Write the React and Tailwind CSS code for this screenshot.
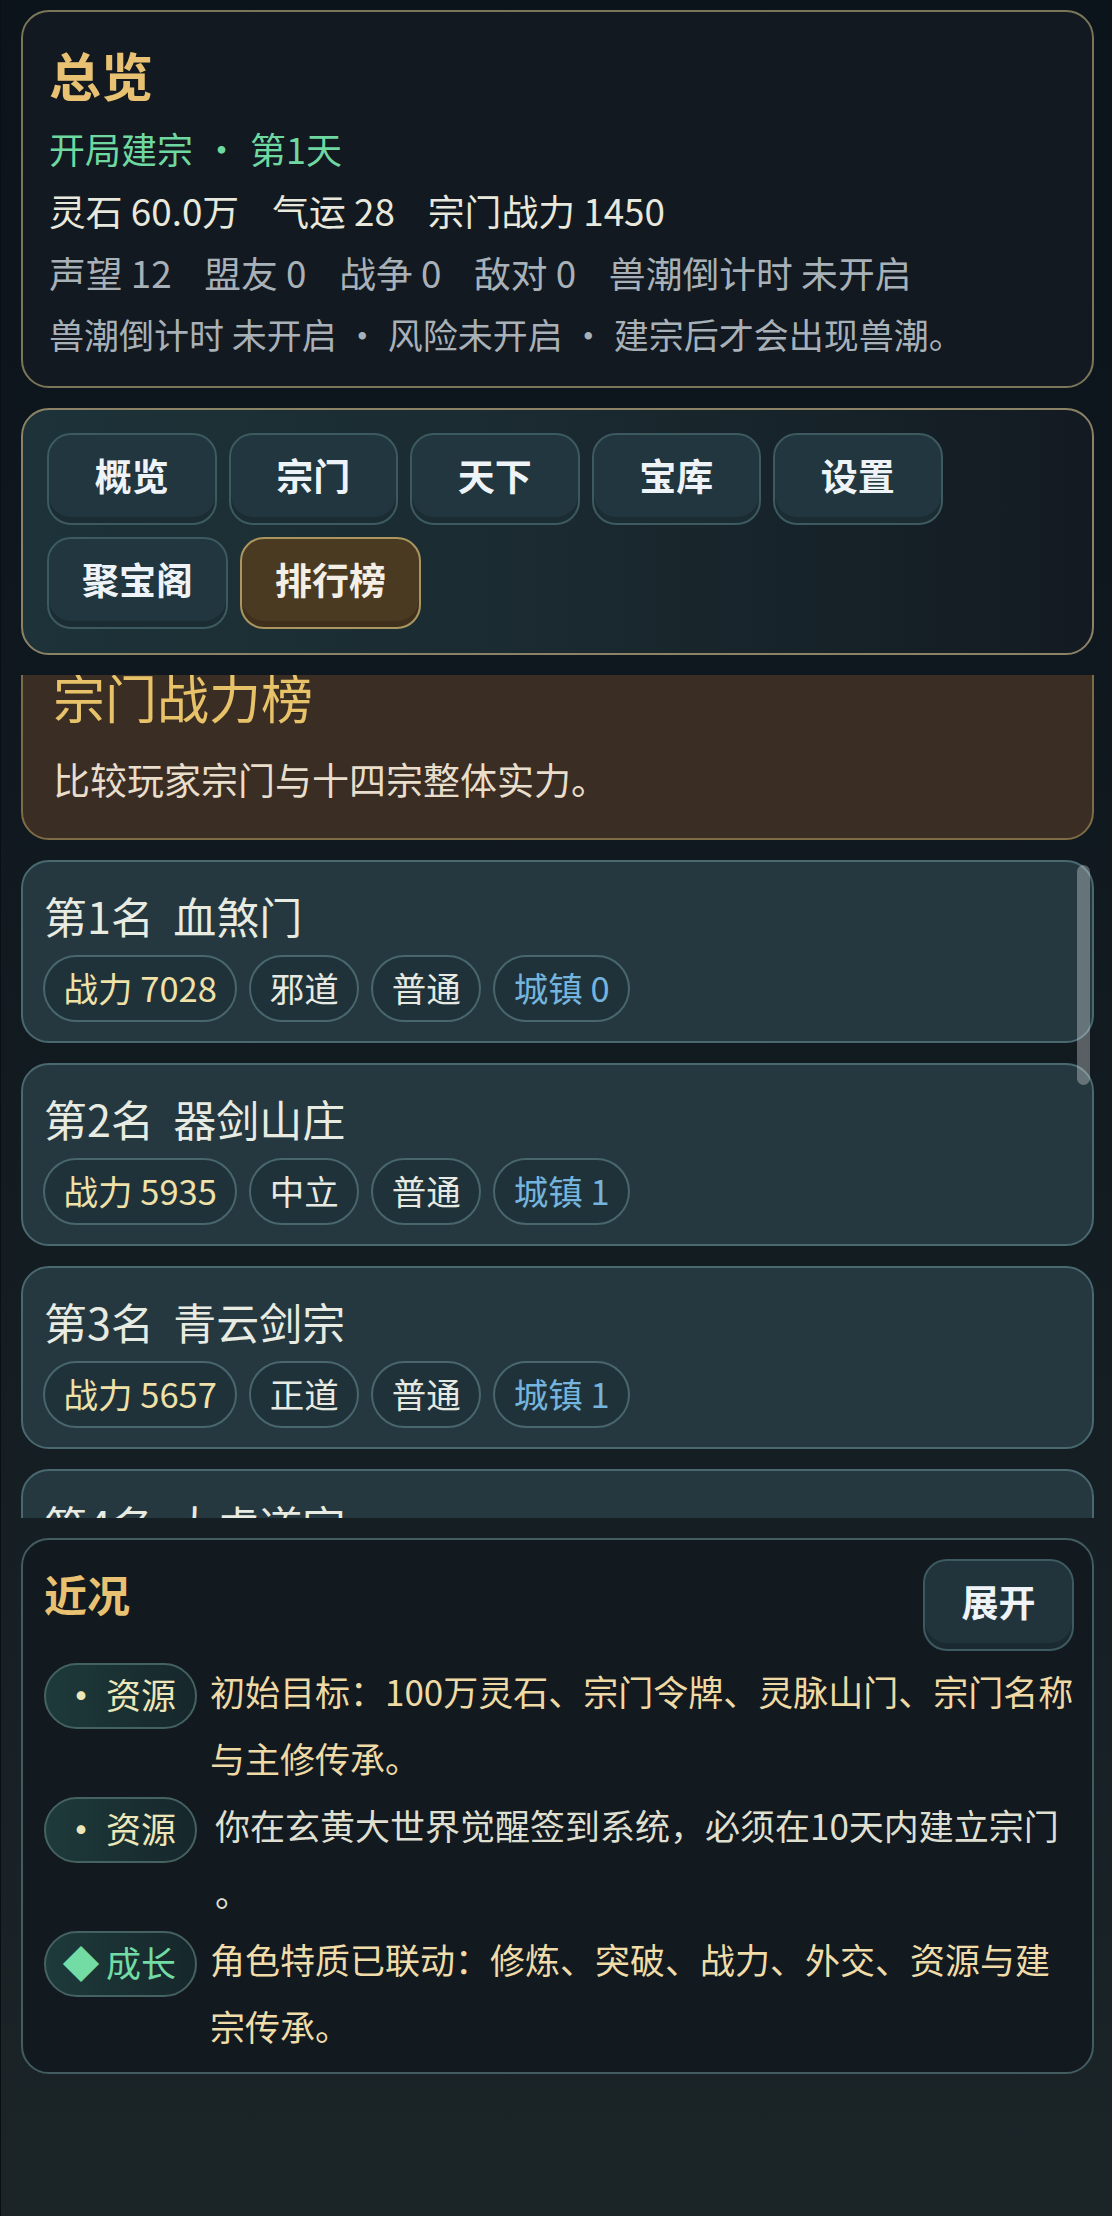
import React from "react";

const tabsRow1 = ["概览", "宗门", "天下", "宝库", "设置"];

function Tab({ label, active }) {
  return (
    <button
      className={
        active
          ? "h-[92px] min-w-[169.5px] px-[33px] pb-[7px] rounded-[24px] border-2 border-[#ab9660] bg-[#4b3a22] text-[37px] font-bold text-[#f4efe6] shadow-[inset_0_-6px_0_rgba(0,0,0,0.16)]"
          : "h-[92px] min-w-[169.5px] px-[33px] pb-[7px] rounded-[24px] border-2 border-[#3c5a60] bg-[#21363e] text-[37px] font-bold text-[#eef3f7] shadow-[inset_0_-6px_0_rgba(0,0,0,0.18)]"
      }
    >
      {label}
    </button>
  );
}

function Pill({ children, tone }) {
  return (
    <span
      className={`h-[67px] px-[18.5px] rounded-full border-2 border-[#48666b] bg-[#1f323a] text-[34.5px] leading-[60px] whitespace-nowrap ${tone}`}
    >
      {children}
    </span>
  );
}

function RankCard({ rank, name, power, side, town }) {
  return (
    <div className="h-[183px] shrink-0 rounded-[28px] border-2 border-[#4a6870] bg-[#25383f] px-[20px] pt-[28px]">
      <div className="h-[50px] pl-[1px] text-[43px] leading-[50px] text-[#e8ebe2] whitespace-pre">
        第{rank}名{"  "}{name}
      </div>
      <div className="mt-[15px] flex gap-[12px]">
        <Pill tone="text-[#efe1a8]">战力 {power}</Pill>
        <Pill tone="text-[#e6eae2]">{side}</Pill>
        <Pill tone="text-[#e6eae2]">普通</Pill>
        <Pill tone="text-[#74b4dd]">城镇 {town}</Pill>
      </div>
    </div>
  );
}

function LogRow({ icon, iconClass, label, labelClass, textClass, children }) {
  return (
    <div className="flex h-[134px]">
      <div className="mt-[6px] flex h-[66px] w-[153px] shrink-0 items-center rounded-full border-2 border-[#44625f] bg-gradient-to-r from-[#1e3a3a] to-[#16272c] pb-[3px]">
        <span className={`flex w-[60px] shrink-0 justify-center pl-[10px] ${iconClass}`}>{icon}</span>
        <span className={`text-[35px] ${labelClass}`}>{label}</span>
      </div>
      <div className={`ml-[13px] whitespace-nowrap text-[35px] leading-[67px] ${textClass}`}>{children}</div>
    </div>
  );
}

function Dot({ wide }) {
  return <span className={`inline-block text-center ${wide ? "w-[57px]" : "w-[51px]"}`}>·</span>;
}

export default function App() {
  return (
    <div className="flex min-h-[2216px] flex-col gap-[20px] border-l border-[#0a0f14] bg-gradient-to-b from-[#0b131b] via-[#121b20] to-[#1b2528] pl-[20px] pr-[18px] pt-[10px] font-['Noto_Sans_CJK_SC','Noto_Sans',sans-serif]">
      <section className="h-[378px] shrink-0 rounded-[28px] border-2 border-[#7b7658] bg-[#121920] px-[26px] pt-[33px]">
        <h1 className="h-[60px] text-[52px] font-bold leading-[60px] text-[#e8c272]">总览</h1>
        <div className="mt-[12px] text-[36px] leading-[62px] text-[#6fd8a0]">
          开局建宗
          <Dot wide />
          第1天
        </div>
        <div className="flex gap-[33px] text-[36.8px] leading-[62px] text-[#e8e8dc]">
          <span>灵石 60.0万</span>
          <span>气运 28</span>
          <span>宗门战力 1450</span>
        </div>
        <div className="flex gap-[32.6px] text-[36.8px] leading-[62px] text-[#a8b0b8]">
          <span>声望 12</span>
          <span>盟友 0</span>
          <span>战争 0</span>
          <span>敌对 0</span>
          <span>兽潮倒计时 未开启</span>
        </div>
        <div className="text-[35px] leading-[62px] text-[#a8b0b8]">
          兽潮倒计时 未开启
          <Dot />
          风险未开启
          <Dot />
          建宗后才会出现兽潮。
        </div>
      </section>

      <nav className="h-[247px] shrink-0 rounded-[28px] border-2 border-[#8c8265] bg-gradient-to-r from-[#1d3339] via-[#1a2a30] to-[#131a22] px-[24px] pt-[23px]">
        <div className="flex gap-[12px]">
          {tabsRow1.map((t) => (
            <Tab key={t} label={t} />
          ))}
        </div>
        <div className="mt-[12px] flex gap-[12px]">
          <Tab label="聚宝阁" />
          <Tab label="排行榜" active />
        </div>
      </nav>

      <div className="relative h-[843px] shrink-0 overflow-hidden">
        <div className="-mt-[32px] flex flex-col gap-[20px]">
          <div className="h-[197px] shrink-0 rounded-[28px] border-2 border-[#7d6c45] bg-[#3a2e24] pl-[30px] pt-[16px]">
            <h2 className="text-[52px] leading-[72px] text-[#e8c268]">宗门战力榜</h2>
            <p className="mt-[16px] text-[37px] leading-[60px] text-[#e9ddcc]">比较玩家宗门与十四宗整体实力。</p>
          </div>
          <RankCard rank={1} name="血煞门" power={7028} side="邪道" town={0} />
          <RankCard rank={2} name="器剑山庄" power={5935} side="中立" town={1} />
          <RankCard rank={3} name="青云剑宗" power={5657} side="正道" town={1} />
          <RankCard rank={4} name="太虚道宗" power={5120} side="正道" town={1} />
        </div>
        <div className="absolute left-[1056px] top-[190px] h-[220px] w-[13px] rounded-full bg-white/30" />
      </div>

      <section className="h-[536px] shrink-0 rounded-[28px] border-2 border-[#425c60] bg-[#12191f] pl-[21px] pr-[18px] pt-[19px]">
        <div className="flex items-start justify-between">
          <h3 className="mt-[4px] text-[43px] font-bold leading-[60px] text-[#e8c272]">近况</h3>
          <button className="h-[92px] w-[151px] rounded-[24px] border-2 border-[#3c5a60] bg-[#21343c] pb-[7px] text-[37px] font-bold text-[#eef3f7] shadow-[inset_0_-6px_0_rgba(0,0,0,0.18)]">
            展开
          </button>
        </div>
        <div className="mt-[6px]">
          <LogRow icon="·" iconClass="text-[#ece6b8] font-bold text-[34px]" label="资源" labelClass="text-[#ece6b8]" textClass="text-[#efd9a5]">
            初始目标：100万灵石、宗门令牌、灵脉山门、宗门名称
            <br />
            与主修传承。
          </LogRow>
          <LogRow icon="·" iconClass="text-[#ece6b8] font-bold text-[34px]" label="资源" labelClass="text-[#ece6b8]" textClass="pl-[5px] text-[#dfdfd0]">
            你在玄黄大世界觉醒签到系统，必须在10天内建立宗门
            <br />
            。
          </LogRow>
          <LogRow icon="◆" iconClass="text-[#72dca4] text-[37px]" label="成长" labelClass="text-[#72dca4]" textClass="text-[#efdca8]">
            角色特质已联动：修炼、突破、战力、外交、资源与建
            <br />
            宗传承。
          </LogRow>
        </div>
      </section>
    </div>
  );
}
